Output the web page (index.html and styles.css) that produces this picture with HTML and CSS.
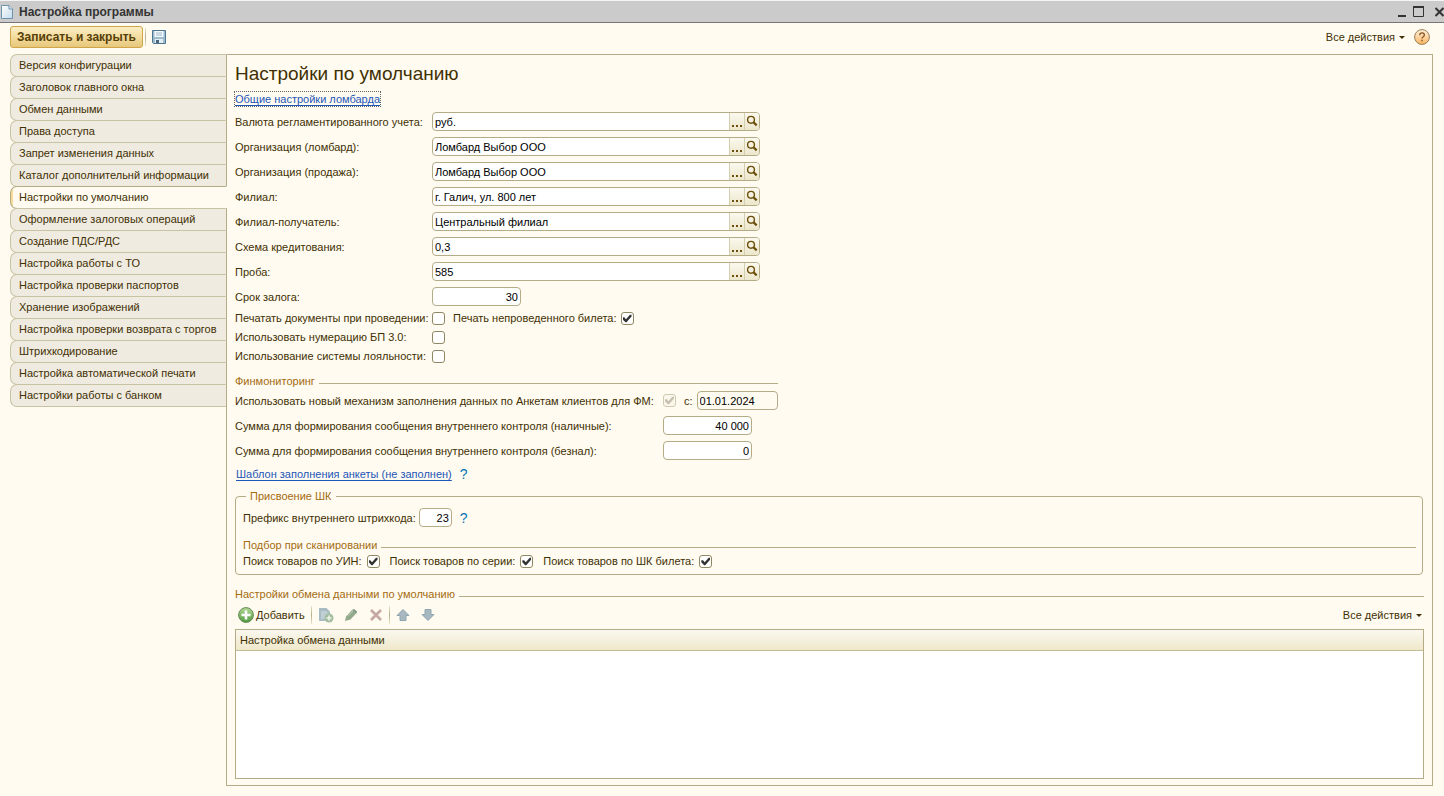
FILE: index.html
```html
<!DOCTYPE html>
<html lang="ru">
<head>
<meta charset="utf-8">
<title>Настройка программы</title>
<link rel="stylesheet" href="styles.css">
</head>
<body>
<svg class="defs" width="0" height="0" aria-hidden="true">
  <defs>
    <linearGradient id="green" x1="0" y1="0" x2="0" y2="1"><stop offset="0" stop-color="#b5d99a"/><stop offset="1" stop-color="#4f9a3c"/></linearGradient>
    <linearGradient id="orange" x1="0" y1="0" x2="0" y2="1"><stop offset="0" stop-color="#fff3e0"/><stop offset="1" stop-color="#fbb560"/></linearGradient>
    <linearGradient id="sheet" x1="0" y1="0" x2="1" y2="1"><stop offset="0" stop-color="#ffffff"/><stop offset="1" stop-color="#c3dcec"/></linearGradient>
    <symbol id="lens" viewBox="0 0 12 12"><circle cx="5" cy="4.8" r="3.4" fill="none" stroke="#6b4f0a" stroke-width="1.4"/><path d="M7.5 7.3L10.7 10.4" stroke="#6b4f0a" stroke-width="2.2"/></symbol>
  </defs>
</svg>
<header class="titlebar">
  <svg width="14" height="16" viewBox="0 0 14 16"><path d="M1.5 1.5H9L12.5 5V14.5H1.5Z" fill="url(#sheet)" stroke="#6e93ad"/><path d="M9 1.5V5H12.5" fill="#e4f0f7" stroke="#6e93ad"/></svg>
  <span class="titlebar-text">Настройка программы</span>
  <button class="window-button" aria-label="Свернуть"><svg width="14" height="14"><path d="M6 11H14" stroke="#333" stroke-width="2"/></svg></button>
  <button class="window-button" aria-label="Развернуть"><svg width="14" height="14"><path d="M1.500 1.500H11.500V11.500H1.500Z" fill="none" stroke="#333"/><path d="M1 2H12" stroke="#333" stroke-width="2"/></svg></button>
  <button class="window-button" aria-label="Закрыть"><svg width="14" height="14"><path d="M3.500 3L11.500 11M11.500 3L3.500 11" stroke="#333" stroke-width="2"/></svg></button>
</header>
<div class="toolbar">
  <button class="save-close">Записать и закрыть</button>
  <span class="separator"></span>
  <button class="icon-button" aria-label="Записать"><svg width="16" height="16" viewBox="0 0 16 16"><path d="M1.500 1.500H14.500V14.500H2.500L1.500 13.500Z" fill="#9dbccf" stroke="#4f7691"/><path d="M3.500 2H12.500V8H3.500Z" fill="#f4f9fc"/><path d="M5 4H11M5 6H11" stroke="#9db9ca"/><path d="M4 10H12V14H4Z" fill="#e3edf3"/><path d="M5 11H8V14H5Z" fill="#46677f"/></svg></button>
  <button class="actions push">Все действия<span class="caret"></span></button>
  <button class="icon-button help-button" aria-label="Справка"><svg width="16" height="16" viewBox="0 0 16 16"><circle cx="8" cy="8" r="7.400" fill="url(#orange)" stroke="#9b7d5a"/><path d="M5.700 6.200C5.700 3.200 10.400 3.200 10.400 5.900C10.400 7.700 8 7.700 8 9.500" fill="none" stroke="#8a5420" stroke-width="1.300"/><path d="M7.300 10.800H8.700V12.200H7.300Z" fill="#8a5420"/></svg></button>
</div>
<div class="workspace">
  <nav class="tabs">
    <button class="tab">Версия конфигурации</button>
    <button class="tab">Заголовок главного окна</button>
    <button class="tab">Обмен данными</button>
    <button class="tab">Права доступа</button>
    <button class="tab">Запрет изменения данных</button>
    <button class="tab">Каталог дополнительнй информации</button>
    <button class="tab selected">Настройки по умолчанию</button>
    <button class="tab">Оформление залоговых операций</button>
    <button class="tab">Создание ПДС/РДС</button>
    <button class="tab">Настройка работы с ТО</button>
    <button class="tab">Настройка проверки паспортов</button>
    <button class="tab">Хранение изображений</button>
    <button class="tab">Настройка проверки возврата с торгов</button>
    <button class="tab">Штрихкодирование</button>
    <button class="tab">Настройка автоматической печати</button>
    <button class="tab">Настройки работы с банком</button>
    <div class="tabs-rest"></div>
  </nav>
  <main class="panel">
    <h1>Настройки по умолчанию</h1>
    <a class="link focused" href="#">Общие настройки ломбарда</a>
    <div class="fields">
      <label for="currency">Валюта регламентированного учета:</label>
      <div class="picker"><input id="currency" value="руб."><button aria-label="Выбрать"><span class="dots"></span></button><button aria-label="Открыть"><svg width="12" height="12"><use href="#lens"/></svg></button></div>
      <label for="org1">Организация (ломбард):</label>
      <div class="picker"><input id="org1" value="Ломбард Выбор ООО"><button aria-label="Выбрать"><span class="dots"></span></button><button aria-label="Открыть"><svg width="12" height="12"><use href="#lens"/></svg></button></div>
      <label for="org2">Организация (продажа):</label>
      <div class="picker"><input id="org2" value="Ломбард Выбор ООО"><button aria-label="Выбрать"><span class="dots"></span></button><button aria-label="Открыть"><svg width="12" height="12"><use href="#lens"/></svg></button></div>
      <label for="branch">Филиал:</label>
      <div class="picker"><input id="branch" value="г. Галич, ул. 800 лет"><button aria-label="Выбрать"><span class="dots"></span></button><button aria-label="Открыть"><svg width="12" height="12"><use href="#lens"/></svg></button></div>
      <label for="target">Филиал-получатель:</label>
      <div class="picker"><input id="target" value="Центральный филиал"><button aria-label="Выбрать"><span class="dots"></span></button><button aria-label="Открыть"><svg width="12" height="12"><use href="#lens"/></svg></button></div>
      <label for="scheme">Схема кредитования:</label>
      <div class="picker"><input id="scheme" value="0,3"><button aria-label="Выбрать"><span class="dots"></span></button><button aria-label="Открыть"><svg width="12" height="12"><use href="#lens"/></svg></button></div>
      <label for="probe">Проба:</label>
      <div class="picker"><input id="probe" value="585"><button aria-label="Выбрать"><span class="dots"></span></button><button aria-label="Открыть"><svg width="12" height="12"><use href="#lens"/></svg></button></div>
      <label for="term">Срок залога:</label>
      <input class="box number" id="term" value="30">
    </div>
    <div class="checks">
      <label for="print">Печатать документы при проведении:</label>
      <div class="line"><input type="checkbox" id="print"><label class="next" for="ticket">Печать непроведенного билета:</label><input type="checkbox" id="ticket" checked></div>
      <label for="bp">Использовать нумерацию БП 3.0:</label>
      <div class="line"><input type="checkbox" id="bp"></div>
      <label for="loyal">Использование системы лояльности:</label>
      <div class="line"><input type="checkbox" id="loyal"></div>
    </div>
    <section class="monitoring">
      <h2 class="group">Финмониторинг</h2>
      <div class="sums">
        <label for="fm">Использовать новый механизм заполнения данных по Анкетам клиентов для ФМ:</label>
        <div class="line"><input type="checkbox" id="fm" checked disabled><label class="next" for="date">с:</label><input class="box date" id="date" value="01.01.2024" readonly></div>
        <label for="cash">Сумма для формирования сообщения внутреннего контроля (наличные):</label>
        <input class="box number" id="cash" value="40 000">
        <label for="noncash">Сумма для формирования сообщения внутреннего контроля (безнал):</label>
        <input class="box number" id="noncash" value="0">
      </div>
    </section>
    <div class="template"><a class="link" href="#">Шаблон заполнения анкеты (не заполнен)</a><a class="hint" href="#">?</a></div>
    <fieldset class="codes">
      <legend>Присвоение ШК</legend>
      <div class="line"><label for="prefix">Префикс внутреннего штрихкода:</label><input class="box prefix" id="prefix" value="23"><a class="hint" href="#">?</a></div>
      <h2 class="group scan">Подбор при сканировании</h2>
      <div class="search">
        <span class="line"><label for="uin">Поиск товаров по УИН:</label><input type="checkbox" id="uin" checked></span>
        <span class="line"><label for="series">Поиск товаров по серии:</label><input type="checkbox" id="series" checked></span>
        <span class="line"><label for="code">Поиск товаров по ШК билета:</label><input type="checkbox" id="code" checked></span>
      </div>
    </fieldset>
    <h2 class="group exchange">Настройки обмена данными по умолчанию</h2>
    <div class="table-tools">
      <button class="add"><svg width="16" height="16" viewBox="0 0 16 16"><circle cx="8" cy="8" r="7.400" fill="url(#green)" stroke="#658a55"/><path d="M8 3.500V12.500M3.500 8H12.500" stroke="#fff" stroke-width="2.600"/></svg>Добавить</button>
      <span class="separator"></span>
      <button class="icon-button" aria-label="Скопировать" disabled><svg width="16" height="16" viewBox="0 0 16 16"><path d="M1 1H8.500L12 4.500V14H1Z" fill="#a9bcc4"/><path d="M3 5H9M3 7H10M3 9H8M3 11H7" stroke="#d8e2e4"/><circle cx="11" cy="11" r="4.500" fill="#a5bda0"/><path d="M11 8.500V13.500M8.500 11H13.500" stroke="#eef3e8" stroke-width="1.600"/></svg></button>
      <button class="icon-button" aria-label="Изменить" disabled><svg width="16" height="16" viewBox="0 0 16 16"><path d="M2 14L3 9.500L9 3L13.500 6L7.500 12.500Z" fill="#93aa8d"/><path d="M9 3L11 2L14 4.500L13.500 6.500Z" fill="#7d9680"/><path d="M4.500 9L10 4" stroke="#bdccb4"/></svg></button>
      <button class="icon-button" aria-label="Удалить" disabled><svg width="16" height="16" viewBox="0 0 16 16"><path d="M3 3L13 13M13 3L3 13" stroke="#c5aaa4" stroke-width="2.800"/></svg></button>
      <span class="separator"></span>
      <button class="icon-button" aria-label="Вверх" disabled><svg width="16" height="16" viewBox="0 0 16 16"><path d="M8 2.500L14 8.500H11V13.500H5V8.500H2Z" fill="#a7b8c1" stroke="#90a5b0"/></svg></button>
      <button class="icon-button" aria-label="Вниз" disabled><svg width="16" height="16" viewBox="0 0 16 16"><path d="M8 13.500L14 7.500H11V2.500H5V7.500H2Z" fill="#a7b8c1" stroke="#90a5b0"/></svg></button>
      <button class="actions push">Все действия<span class="caret"></span></button>
    </div>
    <div class="grid"><table><thead><tr><th>Настройка обмена данными</th></tr></thead><tbody></tbody></table></div>
  </main>
</div>
</body>
</html>
```
FILE: styles.css
```css
:root {
  --cream: #fffbf0;
  --line: #b3ac86;
  --text: #413003;
  --group: #a46b11;
}
* { box-sizing: border-box; }
body {
  margin: 0;
  min-height: 100vh;
  display: flex;
  flex-direction: column;
  background: var(--cream);
  color: var(--text);
  font: 11px/14px "Liberation Sans", Arial, sans-serif;
}
button, input { font: inherit; color: inherit; margin: 0; }
button { padding: 0; border: 0; background: none; }
svg { display: block; flex: none; }
.defs { position: absolute; }

.titlebar {
  display: flex;
  align-items: center;
  height: 23px;
  padding-top: 1px;
  border-top: 1px solid #f4f4f4;
  border-bottom: 1px solid #76767a;
  background: #cbcbcb;
  color: #333;
}
.titlebar-text { flex: 1; padding-left: 5px; font-size: 12px; font-weight: bold; }
.window-button { margin-left: 6px; }
.window-button:last-child { margin-right: -2px; }

.toolbar { display: flex; align-items: center; padding: 3px 14px 6px 10px; }
.save-close {
  height: 22px;
  padding: 0 6px;
  border: 1px solid #cfa54a;
  border-radius: 3px;
  background: linear-gradient(#fbeec5, #f3dc9e 50%, #e7c77b);
  font-size: 12px;
  font-weight: bold;
  color: #553f08;
}
.separator { width: 1px; height: 18px; background: linear-gradient(#e9e4cd, #b3ac86, #e9e4cd); }
.toolbar .separator { margin: 0 5px 0 2px; }
.push { margin-left: auto; }
.actions { display: flex; align-items: center; gap: 4px; }
.caret { border: 3px solid transparent; border-top-color: #413003; border-bottom: 0; }
.help-button { margin-left: 9px; }

.workspace { flex: 1; display: flex; padding: 0 11px 10px 10px; }
.tabs { display: flex; flex-direction: column; flex: none; width: 217px; }
.tab {
  height: 23px;
  margin-bottom: -1px;
  padding: 0 0 1px 8px;
  border: 1px solid #c8c3a3;
  border-right-color: var(--line);
  border-radius: 7px 0 0 7px;
  background: #f0ebe1;
  text-align: left;
  white-space: nowrap;
}
.tab.selected {
  background: linear-gradient(90deg, #f5dc9b 2px, var(--cream) 2px);
  border-color: var(--line);
  border-right-color: var(--cream);
}
.tabs-rest { flex: 1; border-right: 1px solid var(--line); }
.panel {
  flex: 1;
  min-width: 0;
  display: flex;
  flex-direction: column;
  padding: 7px 8px 6px;
  border: 1px solid var(--line);
  border-left: 0;
}
h1 { margin: 0; font-size: 19px; line-height: 24px; font-weight: normal; }
.link { color: #1d56b8; text-decoration: underline; text-underline-offset: 2px; }
.focused { align-self: flex-start; margin: 6px 0; line-height: 14px; outline: 1px dotted #666; }

.fields, .checks { display: grid; grid-template-columns: 197px minmax(0, 328px); row-gap: 6px; align-items: center; white-space: nowrap; }
.checks { padding-top: 6px; }
.box, .picker {
  height: 19px;
  border: 1px solid var(--line);
  border-radius: 4px;
  background: #fff;
  color: #000;
}
.box { padding: 0 2px; }
.picker { display: flex; overflow: hidden; }
.picker input { flex: 1; min-width: 0; padding: 0 2px; border: 0; background: none; outline: 0; }
.picker button {
  display: flex;
  justify-content: center;
  width: 15px;
  border-left: 1px solid #d5cfb0;
  background: linear-gradient(#fbf9ef, #ece6cb);
}
.picker button svg { margin-top: 2px; }
.dots { width: 10px; height: 2px; margin-top: 12px; background: repeating-linear-gradient(90deg, #6b4f0a 0 2px, transparent 2px 4px); }
.number { width: 89px; text-align: right; }
.line { display: flex; align-items: center; white-space: nowrap; }
.next { padding: 0 4px 0 8px; }
input[type="checkbox"] {
  appearance: none;
  flex: none;
  width: 13px;
  height: 13px;
  border: 1px solid #8f8862;
  border-radius: 3px;
  background: #fff;
}
input[type="checkbox"]:checked::before {
  content: "";
  display: block;
  width: 9px;
  height: 9px;
  margin: 1px;
  background: #333;
  clip-path: polygon(0 35%, 20% 35%, 38% 58%, 82% 8%, 100% 8%, 100% 28%, 44% 92%, 32% 92%, 0 58%);
}
input[type="checkbox"]:disabled { border-color: #cfcab2; background: #fbf7ea; }
input[type="checkbox"]:disabled::before { background: #c5c0b0; }
.checks label, .search label { line-height: 13px; }

.group { display: flex; align-items: center; gap: 4px; margin: 0; font-size: 11px; line-height: 14px; font-weight: normal; color: var(--group); }
.group::after { content: ""; flex: 1; height: 1px; margin-top: 4px; background: var(--line); }
.monitoring { max-width: 543px; padding-top: 11px; }
.sums { display: grid; grid-template-columns: 428px 1fr; row-gap: 6px; align-items: center; padding-top: 3px; white-space: nowrap; }
.date { flex: none; width: 81px; background: var(--cream); }
.template { display: flex; gap: 8px; padding: 7px 0 8px 1px; }
.hint { color: #0b73b5; font-size: 14px; text-decoration: none; }
.codes { margin: 0 1px 0 0; padding: 5px 6px 6px 7px; border: 1px solid var(--line); border-radius: 4px; min-width: 0; }
.codes legend { margin-left: 3px; padding: 0 4px; color: var(--group); }
.prefix { width: 33px; margin: 0 8px 0 3px; text-align: right; }
.scan { padding-top: 11px; }
.search { display: flex; gap: 10px; padding-top: 3px; }
.search .line { gap: 5px; }
.exchange { padding-top: 12px; }
.table-tools { display: flex; align-items: center; height: 28px; padding: 0 2px 0 3px; }
.add { display: flex; align-items: center; gap: 2px; }
.table-tools .separator { margin: 0 6px; }
.table-tools .separator + .icon-button { margin-left: 0; }
.table-tools .icon-button + .icon-button { margin-left: 9px; }
.table-tools .icon-button + .separator { margin: 0 5px; }
.grid { flex: 1; min-height: 100px; border: 1px solid var(--line); background: #fff; }
table { width: 100%; border-collapse: separate; border-spacing: 0; }
th { height: 21px; padding: 0 4px; border-bottom: 1px solid #c5bd96; background: linear-gradient(#faf8ef, #efe8cb); font-weight: normal; text-align: left; }
```
